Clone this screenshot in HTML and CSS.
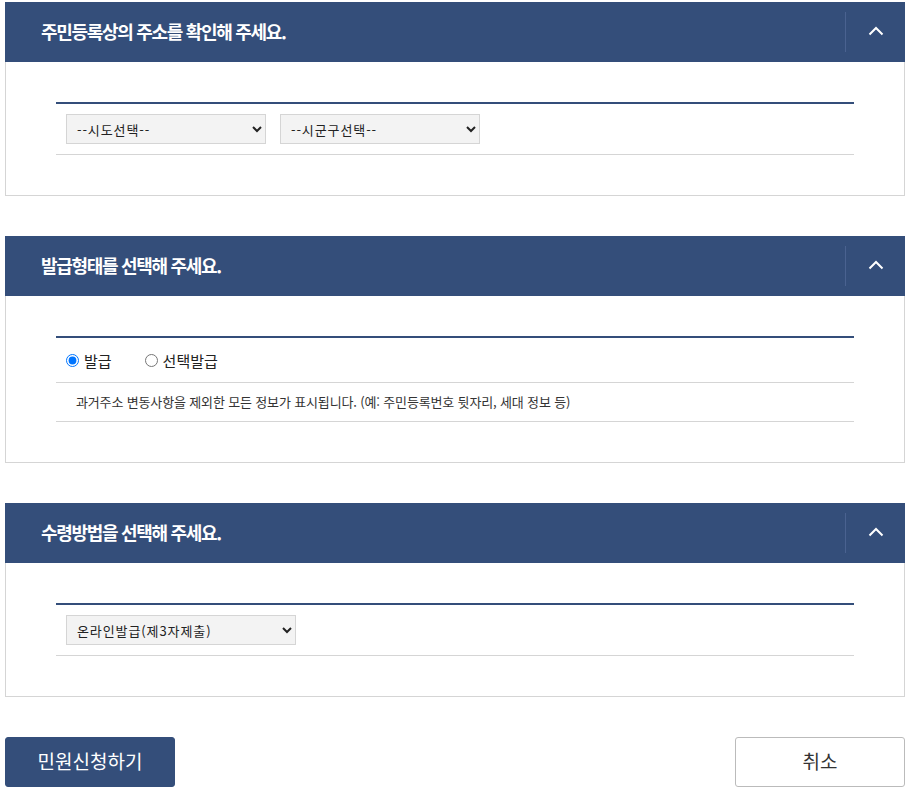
FILE: index.html
```html
<!DOCTYPE html>
<html lang="ko">
<head>
<meta charset="utf-8">
<title>민원신청</title>
<link rel="stylesheet" href="styles.css">
</head>
<body>
<div class="page">
  <section class="panel">
    <div class="panel-head">
      <h2 class="panel-title">주민등록상의 주소를 확인해 주세요.</h2>
      <button class="toggle" type="button" aria-label="접기">
        <svg width="16" height="10" viewBox="0 0 16 10"><path d="M1.5 8.5 L8 2 L14.5 8.5" fill="none" stroke="#fff" stroke-width="2"/></svg>
      </button>
    </div>
    <div class="panel-body">
      <div class="table">
        <div class="row row-select">
          <select class="sel sel-200"><option>--시도선택--</option></select>
          <select class="sel sel-200"><option>--시군구선택--</option></select>
        </div>
      </div>
    </div>
  </section>

  <section class="panel">
    <div class="panel-head">
      <h2 class="panel-title">발급형태를 선택해 주세요.</h2>
      <button class="toggle" type="button" aria-label="접기">
        <svg width="16" height="10" viewBox="0 0 16 10"><path d="M1.5 8.5 L8 2 L14.5 8.5" fill="none" stroke="#fff" stroke-width="2"/></svg>
      </button>
    </div>
    <div class="panel-body">
      <div class="table">
        <div class="row row-radio">
          <label class="radio"><input type="radio" name="type" checked><span>발급</span></label>
          <label class="radio"><input type="radio" name="type"><span>선택발급</span></label>
        </div>
        <div class="row row-desc">과거주소 변동사항을 제외한 모든 정보가 표시됩니다. (예: 주민등록번호 뒷자리, 세대 정보 등)</div>
      </div>
    </div>
  </section>

  <section class="panel">
    <div class="panel-head">
      <h2 class="panel-title">수령방법을 선택해 주세요.</h2>
      <button class="toggle" type="button" aria-label="접기">
        <svg width="16" height="10" viewBox="0 0 16 10"><path d="M1.5 8.5 L8 2 L14.5 8.5" fill="none" stroke="#fff" stroke-width="2"/></svg>
      </button>
    </div>
    <div class="panel-body">
      <div class="table">
        <div class="row row-select">
          <select class="sel sel-230"><option>온라인발급(제3자제출)</option></select>
        </div>
      </div>
    </div>
  </section>

  <div class="actions">
    <button class="btn btn-primary" type="button">민원신청하기</button>
    <button class="btn btn-cancel" type="button">취소</button>
  </div>
</div>
</body>
</html>
```

FILE: styles.css
```css
* { box-sizing: border-box; }
html, body { margin: 0; padding: 0; background: #fff; }
body {
  font-family: "Noto Sans CJK KR", "Noto Sans", sans-serif;
  color: #222;
}
.page {
  padding: 2px 7px 0 5px;
  width: 912px;
}
.panel {
  border: 1px solid #d5d5d5;
  border-top: 0;
  margin-bottom: 40px;
}
.panel-head {
  display: flex;
  align-items: center;
  justify-content: space-between;
  height: 60px;
  background: #344e7a;
  margin: 0 -1px;
}
.panel-title {
  margin: 0 0 2px 0;
  padding-left: 36px;
  font-size: 18px;
  font-weight: 700;
  letter-spacing: -1.3px;
  color: #fff;
}
.toggle {
  width: 60px;
  height: 40px;
  border: 0;
  border-left: 1px solid #4a6290;
  background: transparent;
  display: flex;
  align-items: center;
  justify-content: center;
  padding: 0 0 2px 0;
  cursor: pointer;
}
.panel-body {
  padding: 40px 50px;
}
.table {
  border-top: 2px solid #344e7a;
}
.row {
  border-bottom: 1px solid #d5d5d5;
}
.row-select {
  display: flex;
  gap: 14px;
  padding: 10px 10px;
}
.sel {
  height: 30px;
  background: #f3f3f3;
  border: 1px solid #d5d5d5;
  border-radius: 0;
  font-family: "Noto Sans CJK KR", sans-serif;
  font-size: 13px;
  letter-spacing: 0.9px;
  color: #222;
  padding: 0 4px 0 6px;
}
.sel-200 { width: 200px; }
.sel-230 { width: 230px; }
.row-radio {
  display: flex;
  align-items: center;
  height: 45px;
  padding-left: 5px;
  gap: 28px;
}
.radio {
  display: flex;
  align-items: center;
  font-size: 15px;
  color: #222;
}
.radio input {
  margin: 0 5px 0 5px;
  width: 13px;
  height: 13px;
}
.row-desc {
  height: 39px;
  line-height: 38px;
  padding-left: 20px;
  font-size: 13px;
  letter-spacing: -0.15px;
  color: #333;
}
.actions {
  display: flex;
  justify-content: space-between;
  padding-top: 0;
}
.btn {
  width: 170px;
  height: 50px;
  border-radius: 3px;
  font-family: "Noto Sans CJK KR", sans-serif;
  font-size: 19px;
  padding: 0 0 4px 0;
  cursor: pointer;
}
.btn-primary {
  background: #344e7a;
  border: 1px solid #344e7a;
  color: #fff;
}
.btn-cancel {
  background: #fff;
  border: 1px solid #bbb;
  color: #333;
}
```
